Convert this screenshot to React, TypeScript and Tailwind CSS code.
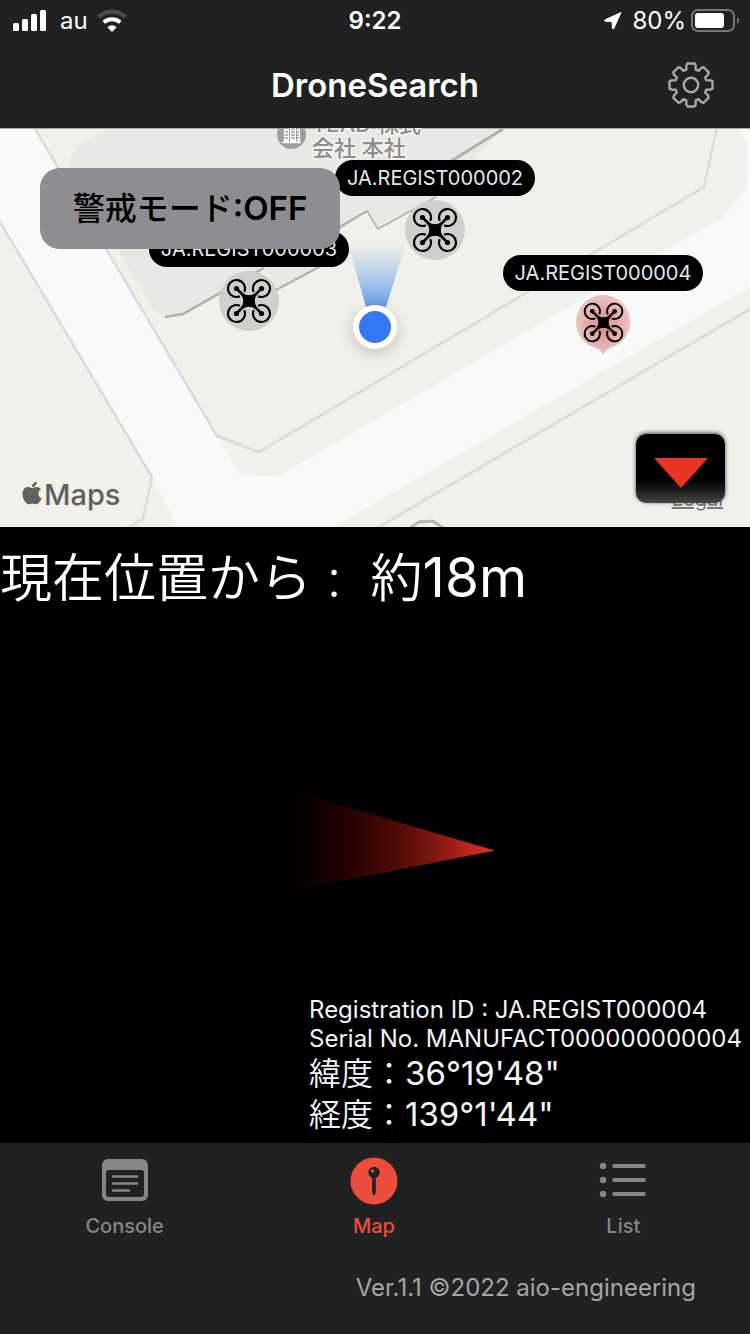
import type { ReactNode } from "react";
import { FaApple } from "react-icons/fa";

const gearPath = (() => {
  const points: string[] = [];
  for (let i = 0; i < 8; i++) {
    const steps = [
      [16, -17],
      [20, -13.5],
      [21.8, -9.5],
      [21.8, 9.5],
      [20, 13.5],
      [16, 17],
    ];
    for (const [r, deg] of steps) {
      const a = ((i * 45 + deg) * Math.PI) / 180;
      points.push(`${(r * Math.sin(a)).toFixed(2)} ${(-r * Math.cos(a)).toFixed(2)}`);
    }
  }
  return `M${points.join("L")}Z`;
})();

function StatusBar() {
  return (
    <div className="grid h-10 grid-cols-3 items-center px-3 pt-0.5 text-2xl leading-6">
      <div className="flex items-center">
        <svg width="36" height="24" viewBox="12 8 36 24" fill="white" aria-hidden="true">
          <rect x="13" y="22" width="6" height="8" rx="1.5" />
          <rect x="22" y="18" width="6" height="12" rx="1.5" />
          <rect x="31" y="13" width="6" height="17" rx="1.5" />
          <rect x="40" y="9" width="6" height="21" rx="1.5" />
        </svg>
        <span className="ml-3">au</span>
        <svg className="ml-2" width="32" height="24" viewBox="-16 -23 32 24" fill="none" aria-hidden="true">
          <path d="M-13.2-15.2A20 20 0 0 1 13.2-15.2" stroke="#4d4d4d" strokeWidth="4" />
          <path d="M-8.2-9.8A12.8 12.8 0 0 1 8.2-9.8" stroke="white" strokeWidth="4" />
          <path d="M0 0L-4.6-4.8A6.6 6.6 0 0 1 4.6-4.8Z" fill="white" />
        </svg>
      </div>
      <time className="text-center font-semibold">9:22</time>
      <div className="-mr-0.5 flex items-center justify-end">
        <svg width="19" height="20" viewBox="604 11 19 20" aria-hidden="true">
          <path
            d="M622 12.500L605.800 20Q605.500 21 606.200 21.200L613 21.500L613.500 28.400Q614 29.500 614.800 28.500Z"
            fill="white"
            stroke="white"
            strokeLinejoin="round"
          />
        </svg>
        <span className="mr-1 ml-2.5">80%</span>
        <svg width="50" height="24" viewBox="690 8 50 24" aria-hidden="true">
          <rect x="692" y="9" width="42" height="21" rx="6" fill="none" stroke="#767676" strokeWidth="2" />
          <rect x="695" y="12" width="29" height="15" rx="3" fill="white" />
          <path d="M737 16.500Q739 17 739 19.500T737 22.500Z" fill="#767676" />
        </svg>
      </div>
    </div>
  );
}

function Header() {
  return (
    <header className="grid h-[88px] grid-cols-[1fr_auto_1fr] items-center px-[35px] pt-0.5">
      <h1 className="col-start-2 text-[33px] leading-10 font-semibold">DroneSearch</h1>
      <button type="button" aria-label="Settings" className="justify-self-end">
        <svg width="48" height="48" viewBox="-24 -24 48 48" fill="none" stroke="#a8a8a8" strokeWidth="2.400" strokeLinejoin="round">
          <path d={gearPath} />
          <circle r="7.200" />
        </svg>
      </button>
    </header>
  );
}

function DroneIcon({ className }: { className: string }) {
  return (
    <svg className={className} viewBox="-24 -24 48 48" fill="none" stroke="black" aria-hidden="true">
      {[0, 90, 180, 270].map((deg) => (
        <g key={deg} transform={`rotate(${deg})`}>
          <path d="M4.700-9.100A8.500 8.500 0 1 1 9.100-4.700" strokeWidth="2.100" />
          <circle cx="12.500" cy="-12.500" r="2.600" fill="black" stroke="none" />
          <path d="M12.500-12.500L4-4" strokeWidth="2.600" />
        </g>
      ))}
      <path
        d="M-7-7Q0-2.500 7-7Q2.500 0 7 7Q0 2.500-7 7Q-2.500 0-7-7Z"
        fill="black"
        strokeWidth="2"
        strokeLinejoin="round"
      />
    </svg>
  );
}

function DroneLabel({ children }: { children: ReactNode }) {
  return (
    <span className="flex h-9 w-[200px] items-center justify-center rounded-full bg-black text-xl text-gray-200">
      {children}
    </span>
  );
}

function MapBackground() {
  return (
    <svg
      className="absolute inset-0 h-full w-full"
      viewBox="0 128 750 399"
      preserveAspectRatio="xMidYMid slice"
      fill="none"
      aria-hidden="true"
    >
      <defs>
        <linearGradient id="beam" x1="0" y1="243" x2="0" y2="307" gradientUnits="userSpaceOnUse">
          <stop stopColor="#5d9bea" stopOpacity="0" />
          <stop offset="0.500" stopColor="#5d9bea" stopOpacity="0.400" />
          <stop offset="1" stopColor="#4a8ae6" stopOpacity="0.850" />
        </linearGradient>
      </defs>
      <path d="M0 128H750V527H0Z" fill="#f1f0eb" />
      {/* road verges */}
      <path
        d="M152 477L143 519L127 527H378L750 309V128H717L704 187L259 452L217 436Z"
        fill="#f0f1eb"
      />
      {/* roads */}
      <path
        d="M0 128H34L217 436L240 474L277 477L723 217L746 189L747 143L738 128H750V287L333 527H172L174 520L152 477L0 220Z"
        fill="#f9f9f9"
      />
      <g stroke="#dadbdd" strokeWidth="2.600">
        <path d="M0 222L152 477L143 519L127 528" />
        <path d="M34 127L217 436L259 452L704 187L717 127" />
        <path d="M750 309L377 528" />
      </g>
      <path d="M410 528L419 522L433 521L443 528" stroke="#b6b6b4" strokeWidth="3" />
      {/* building */}
      <path
        d="M108 128L79 146Q68 155 70 165Q72 175 78 184L153 310L165 317L183 314L264 268L276 290L349 251L338 230L367 211L378 229L435 197L503 128Z"
        fill="#e8e8e6"
      />
      <path d="M165 317L183 314L264 268" stroke="#b0b0ae" strokeWidth="2.500" />
      <path d="M276 290L349 251" stroke="#b0b0ae" strokeWidth="2" />
      <path d="M338 228L367 211" stroke="#b0b0ae" strokeWidth="2.500" />
      <path d="M367 211L378 229L436 197" stroke="#b0b0ae" strokeWidth="1.500" />
      <path d="M440 168L503 129" stroke="#b0b0ae" strokeWidth="3" />
      <path d="M348 243H406L386 307H366Z" fill="url(#beam)" />
      <path d="M0 128.500H750" stroke="#a9a9a7" />
    </svg>
  );
}

function MapView() {
  return (
    <section aria-label="Map" className="relative h-[399px] overflow-hidden">
      <MapBackground />

      <div className="absolute -top-2 left-[277px] flex items-start gap-1.5">
        <svg width="29" height="29" viewBox="0 0 29 29" aria-hidden="true">
          <circle cx="14.500" cy="14.500" r="14.500" fill="#a09f9d" />
          <path d="M7 9H12V22H7ZM13 6H19V22H13ZM20 9H23V22H20Z" fill="white" />
          <path d="M5 22.500H24" stroke="white" strokeWidth="1.500" />
          <path d="M8 12H11M8 15H11M8 18H11M14 9H18M14 12H18M14 15H18M14 18H18M20 12H22M20 15H22M20 18H22" stroke="#a09f9d" strokeWidth="1.300" />
        </svg>
        <p className="-mt-2 text-[22px] leading-6 font-medium whitespace-nowrap text-[#8c8c8a] [paint-order:stroke] [-webkit-text-stroke:3px_#f4f4f2]">
          TEAD 株式
          <br />
          会社 本社
        </p>
      </div>

      <div className="absolute top-8 left-[335px] flex flex-col items-center">
        <DroneLabel>JA.REGIST000002</DroneLabel>
        <span className="mt-1 grid size-[60px] place-items-center rounded-full bg-[#cfcfcd]">
          <DroneIcon className="size-12" />
        </span>
      </div>
      <div className="absolute top-[103px] left-[149px] flex flex-col items-center">
        <DroneLabel>JA.REGIST000003</DroneLabel>
        <span className="mt-1 grid size-[60px] place-items-center rounded-full bg-[#cfcfcd]">
          <DroneIcon className="size-12" />
        </span>
      </div>
      <div className="absolute top-[127px] left-[503px] flex flex-col items-center">
        <DroneLabel>JA.REGIST000004</DroneLabel>
        <span className="relative mt-1 grid h-[60px] w-[54px] justify-center pt-[6px]">
          <svg className="absolute inset-0" width="54" height="60" viewBox="0 0 54 60" aria-hidden="true">
            <defs>
              <radialGradient id="pin">
                <stop stopColor="#d98a8a" />
                <stop offset="1" stopColor="#ebc4c3" />
              </radialGradient>
            </defs>
            <path d="M27 60Q25 55 20 53A27 27 0 1 1 34 53Q29 55 27 60Z" fill="url(#pin)" />
          </svg>
          <DroneIcon className="relative size-[43px]" />
        </span>
      </div>

      <span className="absolute top-[177px] left-[353px] size-11 rounded-full border-[6px] border-white bg-[#3478f6] shadow-[0_4px_16px_rgba(0,0,0,0.2)]" />

      <button
        type="button"
        className="absolute top-10 left-10 flex h-[81px] w-[300px] items-center justify-center rounded-[20px] bg-[#8e8d92] text-[33px] font-semibold text-black"
      >
        <span className="text-[32px] font-medium">警戒モード</span>:OFF
      </button>

      <p className="absolute bottom-3 left-5 flex items-center text-[29px] leading-10 font-medium text-[#60605e]">
        <FaApple className="mb-1 h-[26px] w-6" aria-label="Apple" />
        Maps
      </p>

      <a href="#legal" className="absolute right-[27px] bottom-4 text-xl leading-6 text-[#777] underline decoration-2">
        Legal
      </a>
      <button
        type="button"
        aria-label="Collapse map"
        className="absolute right-[25px] bottom-6 grid h-[69px] w-[89px] place-items-center rounded-[10px] bg-linear-to-b from-black via-black via-55% to-[#464646] pt-2 shadow-[0_-1px_4px_rgba(0,0,0,0.7)]"
      >
        <svg width="54" height="30" viewBox="0 0 54 30" aria-hidden="true">
          <path d="M0 0H54L27 30Z" fill="#eb3323" />
        </svg>
      </button>
    </section>
  );
}

function DronePanel() {
  return (
    <section aria-label="Selected drone" className="flex flex-1 flex-col bg-black">
      <p className="pt-4 text-[52px] leading-[68px] font-[350] whitespace-pre">
        現在位置から : {" "}約<span className="text-[55px] font-normal">18m</span>
      </p>
      <div className="flex flex-1 items-center justify-center pt-[74px] pl-4">
        <svg width="224" height="104" viewBox="271 787 224 104" aria-label="Direction to drone" role="img">
          <defs>
            <linearGradient id="cone">
              <stop stopColor="#000000" />
              <stop offset="0.150" stopColor="#060000" />
              <stop offset="0.350" stopColor="#260101" />
              <stop offset="0.550" stopColor="#4d0a06" />
              <stop offset="0.750" stopColor="#85190f" />
              <stop offset="1" stopColor="#e63224" />
            </linearGradient>
          </defs>
          <path d="M271 783L495 848.500L271 893Z" fill="url(#cone)" />
        </svg>
      </div>
      <div className="self-end pr-2 pb-2 text-2xl leading-[29px] text-gray-100">
        <p>Registration ID : JA.REGIST000004</p>
        <p>Serial No. MANUFACT000000000004</p>
        <p className="text-[33px] leading-[41px]">
          <span className="text-[32px] font-[350]">緯度：</span>36°19'48"
        </p>
        <p className="text-[33px] leading-[41px]">
          <span className="text-[32px] font-[350]">経度：</span>139°1'44"
        </p>
      </div>
    </section>
  );
}

function ConsoleIcon() {
  return (
    <svg width="48" height="48" viewBox="0 0 48 48" fill="none" aria-hidden="true">
      <rect x="1" y="2" width="46" height="42" rx="6" fill="#868686" />
      <rect x="5" y="13" width="38" height="27" rx="3" fill="#212121" />
      <path d="M12 19.500H36M12 26.500H36M12 33.500H28" stroke="#868686" strokeWidth="2.600" strokeLinecap="round" />
    </svg>
  );
}

function MapIcon() {
  return (
    <svg width="48" height="48" viewBox="0 0 48 48" aria-hidden="true">
      <circle cx="24" cy="24" r="23.500" fill="#eb4e3d" />
      <path d="M22.200 19H25.800V34Q25.500 38 24 38.500Q22.500 38 22.200 34Z" fill="#212121" />
      <circle cx="24" cy="15.500" r="5.700" fill="#212121" />
      <circle cx="22.500" cy="14" r="1.700" fill="#eb4e3d" />
    </svg>
  );
}

function ListIcon() {
  return (
    <svg width="48" height="48" viewBox="0 0 48 48" aria-hidden="true">
      {[9, 23, 37].map((y) => (
        <g key={y}>
          <circle cx="4" cy={y} r="3.200" fill="#868686" />
          <path d={`M15 ${y}H45`} stroke="#868686" strokeWidth="3.800" strokeLinecap="round" />
        </g>
      ))}
    </svg>
  );
}

const tabs = [
  { label: "Console", icon: <ConsoleIcon />, active: false },
  { label: "Map", icon: <MapIcon />, active: true },
  { label: "List", icon: <ListIcon />, active: false },
];

function TabBar() {
  return (
    <footer className="h-[191px]">
      <nav className="grid grid-cols-3 pt-[14px] pr-0.5">
        {tabs.map((tab) => (
          <button
            key={tab.label}
            type="button"
            aria-current={tab.active ? "page" : undefined}
            className={`flex flex-col items-center gap-[9px] text-xl leading-6 font-medium ${
              tab.active ? "text-[#eb4e3d]" : "text-[#868686]"
            }`}
          >
            {tab.icon}
            {tab.label}
          </button>
        ))}
      </nav>
      <p className="mt-[34px] pr-[54px] text-right text-2xl text-[#a6a6a6]">Ver.1.1 ©2022 aio-engineering</p>
    </footer>
  );
}

export default function App() {
  return (
    <div className="flex min-h-screen flex-col bg-[#212121] font-['Inter','Noto_Sans_CJK_JP',sans-serif] text-white">
      <StatusBar />
      <Header />
      <main className="flex flex-1 flex-col">
        <MapView />
        <DronePanel />
      </main>
      <TabBar />
    </div>
  );
}
